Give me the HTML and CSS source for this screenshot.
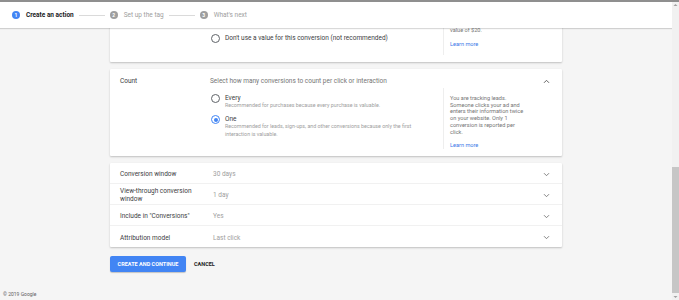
FILE: index.html
```html
<!DOCTYPE html>
<html>
<head>
    <title>Conversion action</title>
    <link rel="stylesheet" href="styles.css">
</head>
<body>
    <div class="top-edge"></div>
    <div class="viewport">
        <div class="page">
            <div class="stepper">
                <div class="step active"><span class="step-num">1</span>Create an action</div>
                <div class="step-line"></div>
                <div class="step"><span class="step-num">2</span>Set up the tag</div>
                <div class="step-line"></div>
                <div class="step"><span class="step-num">3</span>What's next</div>
            </div>

            <div class="main">
                <div class="card value-card">
                    <div class="card-label"></div>
                    <div class="card-body">
                        <div class="option">
                            <span class="radio"></span>
                            <div class="option-text">Don't use a value for this conversion (not recommended)</div>
                        </div>
                    </div>
                    <div class="card-help">
                        <p>value of $20.</p>
                        <a class="learn-more">Learn more</a>
                    </div>
                    <div class="card-toggle"></div>
                </div>

                <div class="card count-card">
                    <div class="card-label">Count</div>
                    <div class="card-body">
                        <div class="card-desc">Select how many conversions to count per click or interaction</div>
                        <div class="option">
                            <span class="radio"></span>
                            <div class="option-text">
                                Every
                                <div class="option-hint">Recommended for purchases because every purchase is valuable.</div>
                            </div>
                        </div>
                        <div class="option">
                            <span class="radio checked"></span>
                            <div class="option-text">
                                One
                                <div class="option-hint">Recommended for leads, sign-ups, and other conversions because only the first interaction is valuable.</div>
                            </div>
                        </div>
                    </div>
                    <div class="card-help">
                        <p>You are tracking leads. Someone clicks your ad and enters their information twice on your website. Only 1 conversion is reported per click.</p>
                        <a class="learn-more">Learn more</a>
                    </div>
                    <div class="card-toggle">
                        <svg width="7" height="5" viewBox="0 0 7 5"><path d="M1 3.8 L3.5 1.3 L6 3.8" fill="none" stroke="#616161" stroke-width="1"/></svg>
                    </div>
                </div>

                <div class="card settings-card">
                    <div class="setting-row">
                        <div class="setting-label">Conversion window</div>
                        <div class="setting-value">30 days</div>
                        <svg class="chevron" width="7" height="5" viewBox="0 0 7 5"><path d="M1 1.2 L3.5 3.7 L6 1.2" fill="none" stroke="#757575" stroke-width="0.9"/></svg>
                    </div>
                    <div class="setting-row">
                        <div class="setting-label">View-through conversion window</div>
                        <div class="setting-value">1 day</div>
                        <svg class="chevron" width="7" height="5" viewBox="0 0 7 5"><path d="M1 1.2 L3.5 3.7 L6 1.2" fill="none" stroke="#757575" stroke-width="0.9"/></svg>
                    </div>
                    <div class="setting-row">
                        <div class="setting-label">Include in "Conversions"</div>
                        <div class="setting-value">Yes</div>
                        <svg class="chevron" width="7" height="5" viewBox="0 0 7 5"><path d="M1 1.2 L3.5 3.7 L6 1.2" fill="none" stroke="#757575" stroke-width="0.9"/></svg>
                    </div>
                    <div class="setting-row">
                        <div class="setting-label">Attribution model</div>
                        <div class="setting-value">Last click</div>
                        <svg class="chevron" width="7" height="5" viewBox="0 0 7 5"><path d="M1 1.2 L3.5 3.7 L6 1.2" fill="none" stroke="#757575" stroke-width="0.9"/></svg>
                    </div>
                </div>

                <div class="actions">
                    <button class="primary-btn">Create and continue</button>
                    <button class="text-btn">Cancel</button>
                </div>
            </div>

            <div class="footer">&copy; 2019 Google</div>
        </div>

        <div class="scrollbar">
            <svg class="scroll-arrow" width="7" height="6" viewBox="0 0 7 6"><path d="M3.5 2 L5.5 4 L1.5 4 Z" fill="#a0a0a0"/></svg>
            <div class="scroll-track"><div class="scroll-thumb"></div></div>
            <svg class="scroll-arrow" width="7" height="6" viewBox="0 0 7 6"><path d="M3.5 4 L5.5 2 L1.5 2 Z" fill="#a0a0a0"/></svg>
        </div>
    </div>
</body>
</html>
```

FILE: styles.css
```css
html, body {
    margin: 0;
    padding: 0;
    height: 100%;
    overflow: hidden;
}

body {
    font-family: Roboto, "Liberation Sans", Arial, sans-serif;
    background-color: #f5f5f5;
    color: #3c4043;
    display: flex;
    flex-direction: column;
}

.top-edge {
    height: 2px;
    background-color: #8f8f8f;
}

.viewport {
    flex: 1;
    display: flex;
    min-height: 0;
}

.page {
    flex: 1;
    position: relative;
    display: flex;
    flex-direction: column;
    overflow: hidden;
}

/* header lies over the scrolled content */
.stepper {
    position: absolute;
    top: 0;
    left: 0;
    right: 0;
    z-index: 2;
    height: 26px;
    background: white;
    box-shadow: 0 1px 1px rgba(0, 0, 0, 0.15);
    display: flex;
    align-items: center;
    padding-left: 12px;
    font-size: 6.5px;
}

.step {
    display: flex;
    align-items: center;
    color: #9e9e9e;
}

.step.active {
    color: #202124;
    font-weight: bold;
}

.step-num {
    width: 8px;
    height: 8px;
    border-radius: 50%;
    background-color: #9e9e9e;
    color: white;
    font-size: 5px;
    font-weight: bold;
    display: flex;
    align-items: center;
    justify-content: center;
    margin-right: 6px;
}

.step.active .step-num {
    background-color: #4285f4;
}

.step-line {
    width: 26px;
    height: 1px;
    background-color: #dadada;
    margin: 0 5px 0 5px;
}

.main {
    margin-top: 20px;
    padding-left: 110px;
    width: 452px;
}

.card {
    background: white;
    box-shadow: 0 1px 2px rgba(0, 0, 0, 0.22);
    border-radius: 1px;
    display: flex;
    padding: 8px 11px 8px 10px;
    margin-bottom: 7px;
    font-size: 6.5px;
    line-height: 8px;
}

.card-label {
    width: 90px;
}

.card-body {
    width: 233px;
}

.card-desc {
    color: #757575;
    margin-bottom: 9px;
}

.option {
    display: flex;
    align-items: flex-start;
    margin-bottom: 5.5px;
}

.radio {
    box-sizing: border-box;
    width: 9px;
    height: 9px;
    border: 1px solid #5f6368;
    border-radius: 50%;
    margin: 0 5px 0 1px;
    flex-shrink: 0;
    position: relative;
}

.radio.checked {
    border-color: #4285f4;
}

.radio.checked::after {
    content: "";
    position: absolute;
    left: 1.5px;
    top: 1.5px;
    width: 4px;
    height: 4px;
    border-radius: 50%;
    background-color: #4285f4;
}

.option-text {
    flex: 1;
    padding-right: 12px;
}

.option-hint {
    color: #9e9e9e;
    font-size: 5.3px;
    line-height: 7.5px;
}

.card-help {
    width: 78px;
    border-left: 1px solid #eeeeee;
    padding-left: 6px;
    font-size: 5.6px;
    line-height: 6.7px;
    color: #757575;
}

.card-help p {
    margin: 0 0 7px 0;
}

.learn-more {
    display: block;
    color: #3b78e7;
    line-height: 7px;
}

.card-toggle {
    flex: 1;
    display: flex;
    justify-content: flex-end;
    padding-right: 1px;
}

.card-toggle svg {
    margin-top: 2px;
}

/* first card is mostly scrolled under the header */
.value-card {
    height: 40px;
    box-sizing: border-box;
    align-items: flex-end;
    padding-bottom: 7px;
}

.value-card .option {
    margin-bottom: 12px;
}

.value-card .card-help {
    padding-bottom: 7.5px;
}

.count-card {
    padding-bottom: 7px;
}

.count-card .card-help {
    margin-top: 11px;
    padding-top: 7px;
    align-self: flex-start;
}

.settings-card {
    display: block;
    padding: 0;
}

.setting-row {
    display: flex;
    align-items: center;
    min-height: 21px;
    padding: 2px 11px 0 10px;
    box-sizing: border-box;
    border-bottom: 1px solid #f1f1f1;
}

.setting-row:last-child {
    border-bottom: none;
}

.setting-label {
    width: 88px;
    padding-right: 5px;
}

.setting-value {
    flex: 1;
    color: #9e9e9e;
}

.chevron {
    margin-right: 1px;
}

.actions {
    display: flex;
    align-items: center;
    margin-top: 9px;
}

button {
    font-family: Roboto, "Liberation Sans", Arial, sans-serif;
    font-size: 5.5px;
    font-weight: bold;
    text-transform: uppercase;
    border: none;
    cursor: pointer;
    padding: 0;
}

.primary-btn {
    width: 76px;
    height: 16px;
    background-color: #4285f4;
    color: white;
    border-radius: 2px;
    box-shadow: 0 1px 1px rgba(0, 0, 0, 0.2);
}

.text-btn {
    background: none;
    color: #212121;
    margin-left: 8px;
}

.footer {
    margin-top: auto;
    padding: 0 0 3px 3px;
    font-size: 5px;
    color: #616161;
}

.scrollbar {
    width: 7px;
    background-color: #f1f1f1;
    display: flex;
    flex-direction: column;
}

.scroll-track {
    flex: 1;
    display: flex;
    flex-direction: column;
    justify-content: flex-end;
    padding-bottom: 1px;
}

.scroll-thumb {
    height: 126px;
    background-color: #c6c6c6;
}
```
